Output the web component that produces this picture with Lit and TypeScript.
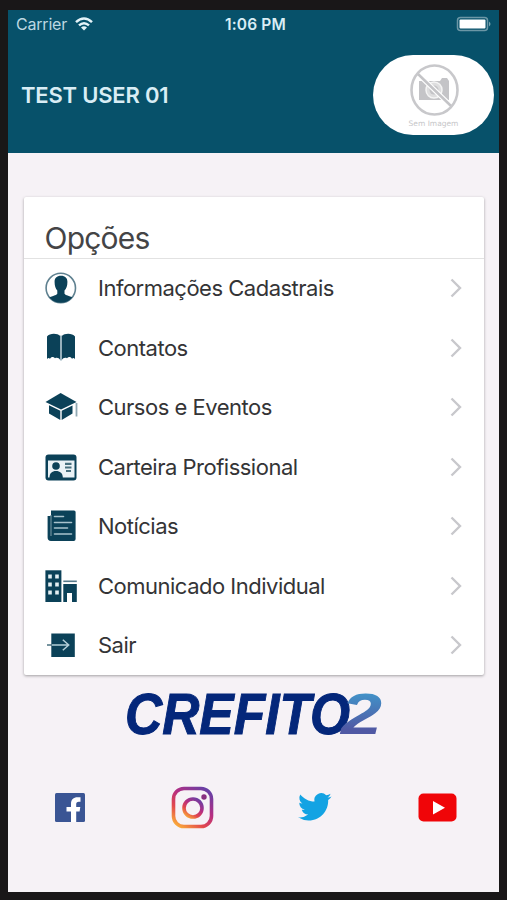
import { LitElement, html, css, svg } from "lit";
import { customElement } from "lit/decorators.js";

const ink = "#0b4158";

const icons = {
  person: svg`
    <defs><clipPath id="disc"><circle cx="17.8" cy="18" r="14.8"/></clipPath></defs>
    <circle cx="17.8" cy="18" r="14.7" fill="#fff" stroke="#5f8190" stroke-width="1.6"/>
    <path clip-path="url(#disc)" fill="${ink}" d="M18 5.800c-4.600 0-6.600 2.600-6.400 6.500 0 3.700 1 6.500 2.700 8.200v3.300c-1 1.800-5.300 2.200-9.300 4.200V34h26v-6c-4-2-8.400-2.400-9.500-4.200v-3.300c1.900-1.700 2.900-4.500 2.900-8.200C24.600 8.400 22.400 5.800 18 5.800z"/>`,
  book: svg`
    <path fill="${ink}" d="M4 6.500C6.500 3 14.500 3 17.200 6v24c-1.200-2-3-2.700-5.200-1.800-1.600-1.600-3.800-1.400-5 .5-1.200-1-2.200-.8-3 .6zM32 6.500C29.500 3 21.500 3 18.800 6v24c1.200-2 3-2.700 5.200-1.800 1.600-1.600 3.800-1.400 5 .5 1.200-1 2.200-.8 3 .6z"/>
    <path d="M18 5.500v25" stroke="#7fa0ae" stroke-width="1.400"/>`,
  cap: svg`
    <path fill="${ink}" d="M17.600 4 33.500 13 18 20.500 2.500 13z"/>
    <path fill="${ink}" d="M6 16.300 17.300 21.800V31L6 24.500zM18.700 21.800 29.500 16.500V24.500L18.700 31z"/>
    <path d="M33.500 14v13.500" stroke="#91a9b3" stroke-width="1.800" fill="none"/>`,
  card: svg`
    <rect x="2.500" y="5.500" width="31" height="26" rx="3" fill="${ink}"/>
    <path fill="#eaf2f6" d="M5 11.500h26.500v17H5z"/>
    <circle cx="13" cy="17" r="3.800" fill="${ink}"/>
    <path fill="${ink}" d="M6.500 29c0-5 2.500-7 6.500-7s6.800 2 6.800 7z"/>
    <path d="M22 14.800h6.500M22 18.500h6.500M23 22h5" stroke="#48707f" stroke-width="2.200"/>`,
  news: svg`
    <path fill="${ink}" d="M8 2.500h23q1.600 0 1.600 1.600v27q0 1.900-1.900 1.900H8q-3.400 0-3.400-3.400V8H8z"/>
    <path d="M8 7v21" stroke="#6d8f9d" stroke-width="1.200"/>
    <path d="M11.500 8.500h9M11.500 14.500h17M11.500 20h13M11.500 26h17" stroke="#a9c2cc" stroke-width="1.600" stroke-linecap="round"/>`,
  building: svg`
    <path fill="${ink}" d="M2.400 2.300h16V34h-16z"/>
    <path fill="#e4eff3" d="M5.200 6.500h3.600v4H5.200zm7 0h3.600v4h-3.600zm-7 8h3.600v4H5.200zm7 0h3.600v4h-3.600zm-7 8h3.600v4H5.200zm7 0h3.600v4h-3.600z"/>
    <path d="M20.300 13.300h13.500" stroke="#55798a" stroke-width="1.600"/>
    <path fill="${ink}" d="M20.300 16h13.500v18H29v-9h-5v9h-3.700z"/>`,
  exit: svg`
    <path fill="${ink}" d="M8.300 6.500h23.500v23.500H8.300z"/>
    <path d="M4 18h4.300" stroke="#48707f" stroke-width="1.500"/>
    <path d="M9 18h16.500M19.800 12.800 25.700 18l-5.900 5.200" stroke="#b4cfd8" stroke-width="1.500" fill="none"/>`,
};

const options = [
  { icon: icons.person, label: "Informações Cadastrais" },
  { icon: icons.book, label: "Contatos" },
  { icon: icons.cap, label: "Cursos e Eventos" },
  { icon: icons.card, label: "Carteira Profissional" },
  { icon: icons.news, label: "Notícias" },
  { icon: icons.building, label: "Comunicado Individual" },
  { icon: icons.exit, label: "Sair" },
];

@customElement("app-root")
export class AppRoot extends LitElement {
  static styles = css`
    :host {
      display: block;
      box-sizing: border-box;
      height: 900px;
      padding: 10px 8px 8px;
      background: #191718;
      font-family: Inter, "Liberation Sans", sans-serif;
      color: #343436;
    }
    svg { display: block; flex: none; }
    .screen {
      height: 882px;
      background: #f6f2f6;
      display: flex;
      flex-direction: column;
    }
    .top {
      height: 143px;
      box-sizing: border-box;
      background: #07516a;
      color: #d9edf5;
    }
    .status {
      display: grid;
      grid-template-columns: 1fr auto 1fr;
      align-items: center;
      height: 28px;
      padding: 0 7px 0 8px;
      font-size: 16px;
    }
    .carrier { display: flex; align-items: center; gap: 8px; color: #bcd8e2; letter-spacing: -0.2px; }
    .time { font-weight: 600; font-size: 15.5px; letter-spacing: 0.15px; padding-left: 3px; }
    .battery { justify-self: end; }
    .user {
      display: flex;
      align-items: center;
      justify-content: space-between;
      height: 80px;
      padding: 17px 5px 0 13px;
    }
    .name { font-size: 22px; font-weight: 600; letter-spacing: -0.2px; }
    .avatar {
      width: 121px;
      height: 80px;
      border-radius: 40px;
      background: #fff;
      display: flex;
      flex-direction: column;
      align-items: center;
      box-sizing: border-box;
      padding-top: 8px;
    }
    .caption { font: 7.5px/10px "DejaVu Sans", sans-serif; color: #c6c6c8; margin-top: 2px; }
    .panel {
      margin: 44px 15px 0 16px;
      height: 478px;
      background: #fff;
      border-radius: 2px;
      box-shadow: 0 1px 3px rgba(0, 0, 0, 0.35);
    }
    .title {
      height: 61.5px;
      box-sizing: border-box;
      border-bottom: 1px solid #e2e2e2;
      margin: 0;
      padding: 21px 0 0 20.5px;
      font-size: 30px;
      line-height: 40px;
      font-weight: 400;
      letter-spacing: -0.8px;
      color: #444446;
    }
    .row {
      height: 59.5px;
      display: flex;
      align-items: center;
      padding: 0 20px 0 19px;
    }
    .label { margin-left: 19px; flex: 1; font-size: 22px; letter-spacing: -0.5px; }
    .logo { margin: 0 0 0 112px; }
    .word { font: italic 700 58px "Liberation Sans", sans-serif; }
    .social {
      display: flex;
      align-items: center;
      justify-content: space-between;
      height: 50px;
      margin: 34px 36px 0 37px;
    }
  `;

  render() {
    return html`
      <div class="screen">
        <header class="top">
          <div class="status">
            <div class="carrier">
              <span>Carrier</span>
              <svg width="18" height="14" viewBox="0 0 18 14" fill="none" stroke="#e4f3f8" stroke-width="2.500">
                <path d="M1 5.200Q9-2.200 17 5.200M4 8.400q5-4.400 10 0"/>
                <path d="M9 13.500 6 10.500q3-2.300 6 0z" fill="#e4f3f8" stroke="none"/>
              </svg>
            </div>
            <div class="time">1:06 PM</div>
            <svg class="battery" width="36" height="16" viewBox="0 0 36 16">
              <rect x="1.500" y="1.500" width="30" height="13" rx="3" fill="none" stroke="#6b97a6" stroke-width="1.500"/>
              <rect x="3.500" y="3.500" width="26" height="9" rx="1" fill="#fff"/>
              <path d="M33 5.500q3 2.500 0 5z" fill="#79a4b0"/>
            </svg>
          </div>
          <div class="user">
            <span class="name">TEST USER 01</span>
            <div class="avatar">
              <svg width="50" height="54" viewBox="0 0 50 54">
                <path fill="#c4c4c7" d="M10 18h3v-2h5v2h13l2-3h5l2 3v19H10z"/>
                <circle cx="25" cy="27" r="8" fill="#dededf" stroke="#f4f4f4" stroke-width="1.500"/>
                <circle cx="25" cy="27" r="4.500" fill="#c4c4c7"/>
                <path d="M9 11 42 43" stroke="#fff" stroke-width="5"/>
                <path d="M9 11 42 43" stroke="#c4c4c7" stroke-width="2.500"/>
                <ellipse cx="25.500" cy="27" rx="23" ry="24.500" fill="none" stroke="#c8c8cb" stroke-width="2.600"/>
              </svg>
              <span class="caption">Sem Imagem</span>
            </div>
          </div>
        </header>
        <section class="panel">
          <h1 class="title">Opções</h1>
          ${options.map(
            (o) => html`<div class="row">
              <svg width="36" height="36" viewBox="0 0 36 36">${o.icon}</svg>
              <span class="label">${o.label}</span>
              <svg width="16" height="22" viewBox="0 0 16 22" fill="none" stroke="#c8c8cc" stroke-width="2.400">
                <path d="M3.500 2.500 12 11l-8.500 8.500"/>
              </svg>
            </div>`
          )}
        </section>
        <svg class="logo" width="280" height="74" viewBox="0 0 280 74">
          <defs>
            <linearGradient id="two" x1="0" y1="0" x2="0" y2="1">
              <stop offset=".2" stop-color="#4292c8"/>
              <stop offset=".75" stop-color="#5059a4"/>
            </linearGradient>
          </defs>
          <text class="word" x="5" y="58.500" textLength="225" lengthAdjust="spacingAndGlyphs" fill="#04277a" stroke="#04277a" stroke-width="1">CREFITO</text>
          <text class="word" x="221" y="58.500" textLength="41" lengthAdjust="spacingAndGlyphs" fill="url(#two)">2</text>
        </svg>
        <footer class="social">
          <svg width="50" height="50" viewBox="0 0 50 50">
            <rect x="10" y="10" width="30" height="29" rx="1.500" fill="#3a5594"/>
            <path fill="#fff" d="M26 39V28.500h-4.500V24H26v-3c0-4.500 2.500-6.700 6.500-6.700h3v4.400h-1.700c-2 0-2.600.9-2.600 2.700V24h4.100l-.7 4.500h-3.400V39z"/>
          </svg>
          <svg width="50" height="50" viewBox="0 0 50 50">
            <defs>
              <linearGradient id="insta" x1=".15" y1="1" x2=".85" y2="0">
                <stop offset="0" stop-color="#f9a63a"/>
                <stop offset=".3" stop-color="#e2474d"/>
                <stop offset=".6" stop-color="#b52e83"/>
                <stop offset="1" stop-color="#6740a5"/>
              </linearGradient>
            </defs>
            <g fill="none" stroke="url(#insta)" stroke-width="3.600">
              <rect x="5.500" y="5.500" width="38" height="38" rx="10.500"/>
              <circle cx="25" cy="25" r="9"/>
            </g>
            <circle cx="36" cy="14" r="2.700" fill="#87307f"/>
          </svg>
          <svg width="50" height="50" viewBox="0 0 50 50">
            <path transform="translate(8 7) scale(1.400)" fill="#13a3e3" d="M23.950 4.570a10 10 0 0 1-2.820.770 4.960 4.960 0 0 0 2.160-2.720c-.950.550-2 .950-3.130 1.180a4.920 4.920 0 0 0-8.380 4.480C7.690 8.090 4.070 6.130 1.640 3.160a4.920 4.920 0 0 0 1.520 6.570 4.900 4.900 0 0 1-2.230-.610v.060a4.920 4.920 0 0 0 3.950 4.830 5 5 0 0 1-2.210.080 4.940 4.940 0 0 0 4.600 3.420A9.870 9.870 0 0 1 0 19.540a13.990 13.990 0 0 0 7.550 2.210c9.050 0 14-7.500 14-13.980 0-.210 0-.420-.020-.630a9.940 9.940 0 0 0 2.420-2.570z"/>
          </svg>
          <svg width="50" height="50" viewBox="0 0 50 50">
            <rect x="5.500" y="10.500" width="38" height="28" rx="5" fill="#f00508"/>
            <path d="M20 18v13.500l12-6.700z" fill="#fff"/>
          </svg>
        </footer>
      </div>
    `;
  }
}
